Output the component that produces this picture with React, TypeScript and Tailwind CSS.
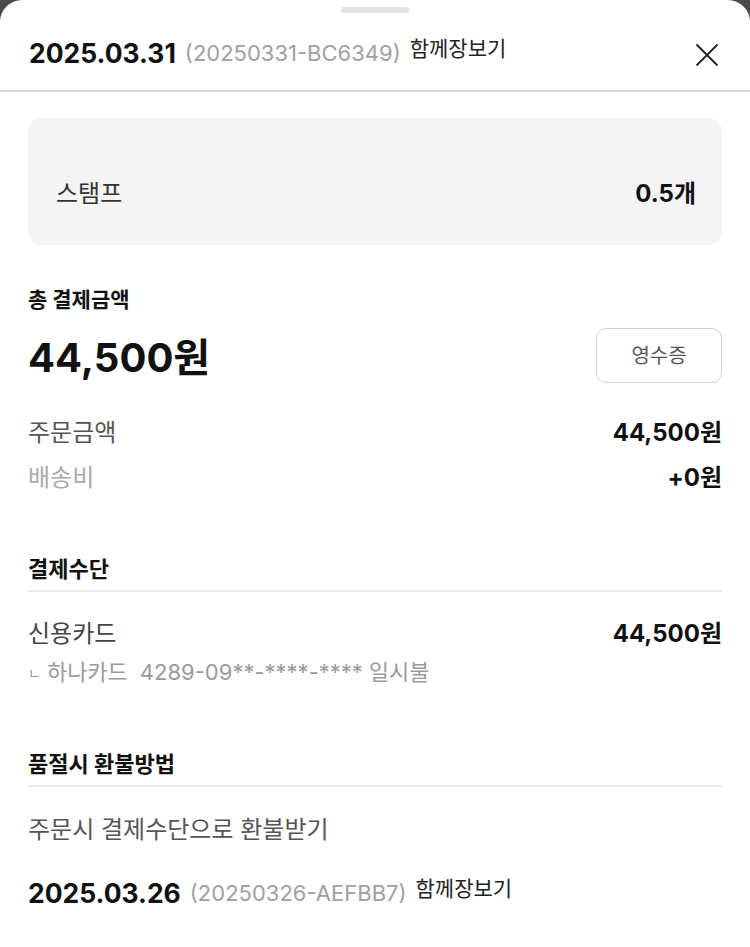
import React from "react";

const font = { fontFamily: "Inter, 'Noto Sans CJK KR', sans-serif" };

function OrderHeader({ date, code }: { date: string; code: string }) {
  return (
    <div className="flex items-center h-[36px]">
      <span className="text-[26.5px] leading-[36px] font-bold text-[#111]">{date}</span>
      <span className="ml-[9px] text-[22px] leading-[36px] text-[#a0a0a0]">({code})</span>
      <span className="ml-[9px] text-[21px] leading-[26px] text-[#222] relative -top-[4px]">함께장보기</span>
    </div>
  );
}

export default function App() {
  return (
    <div className="w-[750px] h-[947px] bg-[#4a4a4a] overflow-hidden" style={font}>
      <div className="bg-white h-full rounded-t-[22px] flex flex-col">
        <div className="flex justify-center pt-[7px]">
          <div className="w-[68px] h-[6px] rounded-full bg-[#e2e2e2]" />
        </div>
        <div className="flex items-center justify-between pl-[29px] pr-[31px] h-[79px] border-b-2 border-[#d5d9dc]">
          <div className="mt-[3px]">
            <OrderHeader date="2025.03.31" code="20250331-BC6349" />
          </div>
          <svg width="24" height="24" viewBox="0 0 24 24" className="mt-[6px]">
            <path d="M1.5 1.5 L22.5 22.5 M22.5 1.5 L1.5 22.5" stroke="#222" strokeWidth="1.8" />
          </svg>
        </div>
        <div className="px-[28px] pt-[26px]">
          <div className="h-[127px] bg-[#f4f4f4] rounded-[14px] flex items-end justify-between px-[28px] pb-[36px]">
            <span className="text-[24px] leading-[30px] text-[#333]">스탬프</span>
            <span className="text-[24px] leading-[30px] font-bold text-[#111] mr-[-2px]">0.5개</span>
          </div>

          <div className="mt-[40px] text-[21px] leading-[30px] font-bold text-[#111]">총 결제금액</div>
          <div className="mt-[13px] flex items-center justify-between h-[55px]">
            <span className="text-[40px] leading-[55px] font-bold text-[#111] mt-[3px]">44,500원</span>
            <div className="w-[126px] h-[55px] border border-[#d0d0d0] rounded-[10px] flex items-center justify-center text-[20px] text-[#555]">
              영수증
            </div>
          </div>

          <div className="mt-[34px] flex justify-between items-center h-[32px]">
            <span className="text-[24px] leading-[32px] text-[#555]">주문금액</span>
            <span className="text-[24px] leading-[32px] font-bold text-[#111]">44,500원</span>
          </div>
          <div className="mt-[13px] flex justify-between items-center h-[32px]">
            <span className="text-[24px] leading-[32px] text-[#aaa]">배송비</span>
            <span className="text-[24px] leading-[32px] font-bold text-[#111]">+0원</span>
          </div>

          <div className="mt-[60px] pb-[6px] border-b-2 border-[#ebebeb] text-[22px] leading-[30px] font-bold text-[#111]">결제수단</div>
          <div className="mt-[26px] flex justify-between items-center h-[32px]">
            <span className="text-[24px] leading-[32px] text-[#444]">신용카드</span>
            <span className="text-[24px] leading-[32px] font-bold text-[#111]">44,500원</span>
          </div>
          <div className="mt-[6px] text-[22px] leading-[30px] text-[#9a9a9a] flex items-center">
            <span className="text-[14px] mr-[6px] mt-[2px]">ㄴ</span>
            <span>하나카드</span>
            <span className="ml-[12px]">4289-09**-****-****</span>
            <span className="ml-[6px]">일시불</span>
          </div>

          <div className="mt-[61px] pb-[6px] border-b-2 border-[#ebebeb] text-[22px] leading-[30px] font-bold text-[#111]">품절시 환불방법</div>
          <div className="mt-[27px] text-[24px] leading-[32px] text-[#555]">주문시 결제수단으로 환불받기</div>
          <div className="mt-[29px]">
            <OrderHeader date="2025.03.26" code="20250326-AEFBB7" />
          </div>
        </div>
      </div>
    </div>
  );
}
